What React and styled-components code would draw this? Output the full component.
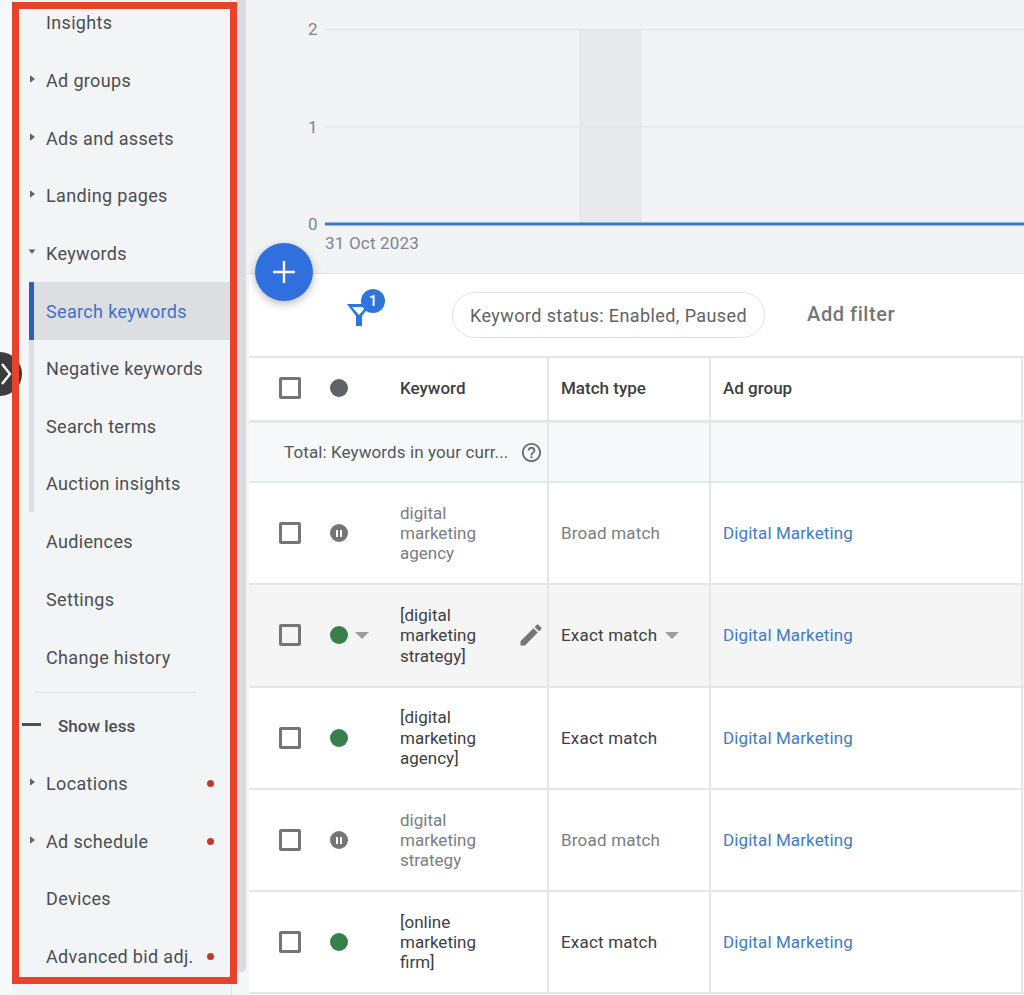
import React from 'react';
import styled, { createGlobalStyle } from 'styled-components';

const Global = createGlobalStyle`
  html, body { margin: 0; padding: 0; background: #fff; }
  body { font-family: Roboto, "Liberation Sans", sans-serif; }
  * { box-sizing: border-box; }
`;

const Page = styled.div`
  position: relative;
  display: flex;
  width: 1024px;
  height: 995px;
  overflow: hidden;
  background: #f1f3f4;
`;
const Sidebar = styled.nav`
  flex: 0 0 232px;
  height: 995px;
  background: linear-gradient(to right, #f7f8f9 12px, #f2f4f6 12px);
  border-right: 1px solid #dfe1e4;
  overflow: hidden;
`;
const NavList = styled.div`
  display: flex;
  flex-direction: column;
  margin-top: -6px;
`;
const NavItem = styled.div`
  display: flex;
  align-items: center;
  height: 57.67px;
  padding-left: 28px;
  font-size: 18px;
  letter-spacing: 0.34px;
  color: #4b4e52;
  white-space: nowrap;
`;
const SubItem = styled.div`
  display: flex;
  align-items: center;
  height: 57.67px;
  margin-left: 29px;
  padding-left: 12px;
  border-left: 5px solid ${p => (p.$active ? '#2f5fb8' : '#dcdee1')};
  background: ${p => (p.$active ? '#dcdee1' : 'transparent')};
  font-size: 18px;
  letter-spacing: 0.34px;
  color: ${p => (p.$active ? '#3f72c6' : '#4b4e52')};
  white-space: nowrap;
`;
const LastSub = styled(SubItem)`
  height: 57px;
  margin-bottom: 0.67px;
`;
const CaretSlot = styled.span`
  flex: 0 0 18px;
  display: flex;
  align-items: center;
  height: 14px;
  margin-top: -3px;
`;
const Label = styled.span`
  flex: 1;
`;
const Alert = styled.span`
  flex: 0 0 7px;
  width: 7px;
  height: 7px;
  margin-right: 17px;
  border-radius: 50%;
  background: #c0392f;
`;
const Divider = styled.div`
  height: 1px;
  margin: 6.5px 35px 3.5px 35px;
  background: #dfe1e4;
`;
const ShowLess = styled.div`
  display: flex;
  align-items: center;
  gap: 17px;
  height: 57.67px;
  padding: 1px 0 0 22px;
  font-size: 17px;
  font-weight: 500;
  color: #4b4e52;
`;
const Dash = styled.span`
  width: 19px;
  height: 2.5px;
  margin-top: -3px;
  background: #4b4e52;
`;
const ScrollTrack = styled.div`
  flex: 0 0 17px;
  height: 995px;
  padding-left: 5px;
  padding-right: 3px;
  background: #f4f6f7;
`;
const ScrollThumb = styled.div`
  width: 9px;
  height: 972px;
  border-radius: 0 0 5px 5px;
  background: #dadce0;
`;
const Main = styled.main`
  flex: 1;
  min-width: 0;
  display: flex;
  flex-direction: column;
  background: #fff;
`;
const ChartPanel = styled.section`
  height: 274px;
  background: #f1f3f5;
  border-bottom: 1px solid #e0e2e5;
  margin-left: -3px;
`;
const ChartSvg = styled.svg`
  display: block;
`;
const FilterBar = styled.div`
  display: flex;
  align-items: center;
  height: 82px;
  padding: 0 0 0 98px;
`;
const FunnelWrap = styled.span`
  position: relative;
  flex: 0 0 105px;
  height: 46px;
  display: flex;
  align-items: center;
`;
const Badge = styled.span`
  position: absolute;
  left: 14px;
  top: -3px;
  width: 24px;
  height: 24px;
  border-radius: 50%;
  background: #2f76dc;
  color: #fff;
  font-size: 15px;
  font-weight: 500;
  display: flex;
  align-items: center;
  justify-content: center;
`;
const Chip = styled.div`
  display: flex;
  align-items: center;
  height: 46px;
  padding: 0 17px;
  border: 1.5px solid #dfe1e4;
  border-radius: 23px;
  font-size: 18px;
  letter-spacing: 0.41px;
  color: #5f6368;
  white-space: nowrap;
`;
const AddFilter = styled.div`
  margin-left: 42px;
  margin-top: -2px;
  font-size: 20px;
  font-weight: 500;
  letter-spacing: 0.55px;
  color: #72767a;
`;
const Row = styled.div`
  display: grid;
  grid-template-columns: 300px 162px 312px 1fr;
  height: ${p => p.$h}px;
  background: ${p => p.$bg || '#fff'};
  border-bottom: ${p => p.$bb || 2}px solid #e4e6e8;
  border-top: ${p => p.$bt || 0}px solid #e4e6e8;
`;
const Cell = styled.div`
  display: flex;
  align-items: center;
  min-width: 0;
  padding-left: 12px;
  border-right: 2px solid #e4e6e8;
  font-size: 17px;
  color: ${p => p.$color || '#3c4043'};
  font-weight: ${p => p.$w || 400};
`;
const LastCell = styled.div``;
const KeywordCell = styled(Cell)`
  padding-left: 30px;
`;
const Box = styled.span`
  flex: 0 0 22px;
  height: 22px;
  margin-right: 29px;
  border: 3px solid #757575;
  border-radius: 2px;
`;
const StatusSlot = styled.span`
  flex: 0 0 70px;
  display: flex;
  align-items: center;
  gap: 7px;
`;
const Dot = styled.span`
  width: 18px;
  height: 18px;
  border-radius: 50%;
  background: ${p => p.$c};
  display: flex;
  align-items: center;
  justify-content: center;
  gap: 2px;
`;
const PauseBar = styled.i`
  width: 2px;
  height: 7px;
  background: #fff;
`;
const Arrow = styled.span`
  width: 0;
  height: 0;
  border-left: 7px solid transparent;
  border-right: 7px solid transparent;
  border-top: 7px solid #9a9da1;
`;
const KeywordText = styled.span`
  width: 100px;
  line-height: 20.3px;
  color: ${p => p.$c};
`;
const Pencil = styled.svg`
  margin-left: 17px;
  fill: #757575;
`;
const TotalCell = styled(Cell)`
  padding-left: 35px;
  gap: 12px;
  white-space: nowrap;
  letter-spacing: 0.1px;
  color: #54575b;
`;
const MatchWrap = styled.span`
  display: flex;
  align-items: center;
  gap: 8px;
  letter-spacing: 0.2px;
`;
const Link = styled.span`
  color: #3f7cc9;
  letter-spacing: 0.1px;
`;
const Help = styled.svg`
  fill: #6b6f73;
  flex: none;
`;
const Fab = styled.div`
  position: absolute;
  left: 255px;
  top: 243px;
  width: 58px;
  height: 58px;
  border-radius: 50%;
  background: #2f6fde;
  box-shadow: 0 3px 8px rgba(60, 64, 67, 0.35);
  display: flex;
  align-items: center;
  justify-content: center;
`;
const Handle = styled.div`
  position: absolute;
  left: -22px;
  top: 352px;
  width: 44px;
  height: 44px;
  border-radius: 50%;
  background: #3c3c3e;
`;
const HandleChevron = styled.svg`
  position: absolute;
  left: 0;
  top: 362px;
`;
const Frame = styled.div`
  position: absolute;
  left: 12px;
  top: 2px;
  width: 225px;
  height: 982px;
  border: 7px solid #e8432a;
  pointer-events: none;
`;

const Right = () => (
  <svg width="8" height="12" viewBox="0 0 8 12"><path d="M2 2.2 7 6l-5 3.8z" fill="#5f6368" /></svg>
);
const Down = () => (
  <svg width="8" height="8" viewBox="0 0 8 8"><path d="M.5 1.5h7L4 6z" fill="#5f6368" /></svg>
);

const rows = [
  { kw: 'digital marketing agency', match: 'Broad match', paused: true },
  { kw: '[digital marketing strategy]', match: 'Exact match', hover: true },
  { kw: '[digital marketing agency]', match: 'Exact match' },
  { kw: 'digital marketing strategy', match: 'Broad match', paused: true },
  { kw: '[online marketing firm]', match: 'Exact match' },
];

const HeaderCell = styled(Cell)`
  padding-bottom: 2px;
`;
const HeaderKeyword = styled(KeywordCell)`
  padding-bottom: 2px;
`;

export default function App() {
  return (
    <Page>
      <Global />
      <Sidebar>
        <NavList>
          <NavItem><CaretSlot /><Label>Insights</Label></NavItem>
          <NavItem><CaretSlot><Right /></CaretSlot><Label>Ad groups</Label></NavItem>
          <NavItem><CaretSlot><Right /></CaretSlot><Label>Ads and assets</Label></NavItem>
          <NavItem><CaretSlot><Right /></CaretSlot><Label>Landing pages</Label></NavItem>
          <NavItem><CaretSlot><Down /></CaretSlot><Label>Keywords</Label></NavItem>
          <SubItem $active>Search keywords</SubItem>
          <SubItem>Negative keywords</SubItem>
          <SubItem>Search terms</SubItem>
          <LastSub>Auction insights</LastSub>
          <NavItem><CaretSlot /><Label>Audiences</Label></NavItem>
          <NavItem><CaretSlot /><Label>Settings</Label></NavItem>
          <NavItem><CaretSlot /><Label>Change history</Label></NavItem>
          <Divider />
          <ShowLess><Dash />Show less</ShowLess>
          <NavItem><CaretSlot><Right /></CaretSlot><Label>Locations</Label><Alert /></NavItem>
          <NavItem><CaretSlot><Right /></CaretSlot><Label>Ad schedule</Label><Alert /></NavItem>
          <NavItem><CaretSlot /><Label>Devices</Label></NavItem>
          <NavItem><CaretSlot /><Label>Advanced bid adj.</Label><Alert /></NavItem>
        </NavList>
      </Sidebar>
      <ScrollTrack><ScrollThumb /></ScrollTrack>
      <Main>
        <ChartPanel>
          <ChartSvg width="778" height="273" viewBox="246 0 778 273">
            <rect x="579" y="29" width="63" height="195" fill="#e8e9ec" />
            <path d="M324 29.5H1024M324 127H1024" stroke="#dfe1e4" strokeWidth="1" />
            <path d="M325 224H1024" stroke="#3f74d2" strokeWidth="3" />
            <g fontFamily="Roboto, sans-serif" fontSize="17" fill="#80868b">
              <text x="308" y="35">2</text>
              <text x="308" y="133">1</text>
              <text x="308" y="230">0</text>
              <text x="325" y="249" letterSpacing="0.2">31 Oct 2023</text>
            </g>
          </ChartSvg>
        </ChartPanel>
        <FilterBar>
          <FunnelWrap>
            <svg width="24" height="24" viewBox="0 0 24 24">
              <path fillRule="evenodd" d="M0 1h24L15 13v10H9V13zM5 4l7 8 7-8z" fill="#2f76dc" />
            </svg>
            <Badge>1</Badge>
          </FunnelWrap>
          <Chip>Keyword status: Enabled, Paused</Chip>
          <AddFilter>Add filter</AddFilter>
        </FilterBar>
        <Row $h={67} $bt={2} $bb={3}>
          <HeaderKeyword $w={500}>
            <Box />
            <StatusSlot><Dot $c="#5f6368" /></StatusSlot>
            Keyword
          </HeaderKeyword>
          <HeaderCell $w={500}>Match type</HeaderCell>
          <HeaderCell $w={500}>Ad group</HeaderCell>
          <LastCell />
        </Row>
        <Row $h={60} $bg="#f6f8fa">
          <TotalCell>
            Total: Keywords in your curr...
            <Help width="23" height="23" viewBox="0 0 24 24">
              <path d="M11 18h2v-2h-2v2zm1-16C6.48 2 2 6.48 2 12s4.48 10 10 10 10-4.48 10-10S17.52 2 12 2zm0 18c-4.41 0-8-3.59-8-8s3.59-8 8-8 8 3.59 8 8-3.59 8-8 8zm0-14c-2.21 0-4 1.79-4 4h2c0-1.1.9-2 2-2s2 .9 2 2c0 2-3 1.75-3 5h2c0-2.25 3-2.5 3-5 0-2.21-1.79-4-4-4z" />
            </Help>
          </TotalCell>
          <Cell />
          <Cell />
          <LastCell />
        </Row>
        {rows.map(r => (
          <Row key={r.kw} $h={102.3} $bg={r.hover ? '#f5f5f5' : '#fff'}>
            <KeywordCell>
              <Box />
              <StatusSlot>
                {r.paused
                  ? <Dot $c="#757575"><PauseBar /><PauseBar /></Dot>
                  : <Dot $c="#37804a" />}
                {r.hover && <Arrow />}
              </StatusSlot>
              <KeywordText $c={r.paused ? '#7a7d81' : '#3c4043'}>{r.kw}</KeywordText>
              {r.hover && (
                <Pencil width="28" height="28" viewBox="0 0 24 24">
                  <path d="M3 17.25V21h3.75L17.81 9.94l-3.75-3.75L3 17.25zM20.71 7.04c.39-.39.39-1.02 0-1.41l-2.34-2.34c-.39-.39-1.02-.39-1.41 0l-1.83 1.83 3.75 3.75 1.83-1.83z" />
                </Pencil>
              )}
            </KeywordCell>
            <Cell $color={r.paused ? '#7a7d81' : '#3c4043'}>
              <MatchWrap>{r.match}{r.hover && <Arrow />}</MatchWrap>
            </Cell>
            <Cell><Link>Digital Marketing</Link></Cell>
            <LastCell />
          </Row>
        ))}
      </Main>
      <Fab>
        <svg width="26" height="26" viewBox="0 0 26 26"><path d="M13 2v22M2 13h22" stroke="#fff" strokeWidth="2.4" /></svg>
      </Fab>
      <Handle />
      <HandleChevron width="12" height="24" viewBox="0 0 12 24">
        <path d="M2 2l8 10-8 10" fill="none" stroke="#fff" strokeWidth="2.4" />
      </HandleChevron>
      <Frame />
    </Page>
  );
}
